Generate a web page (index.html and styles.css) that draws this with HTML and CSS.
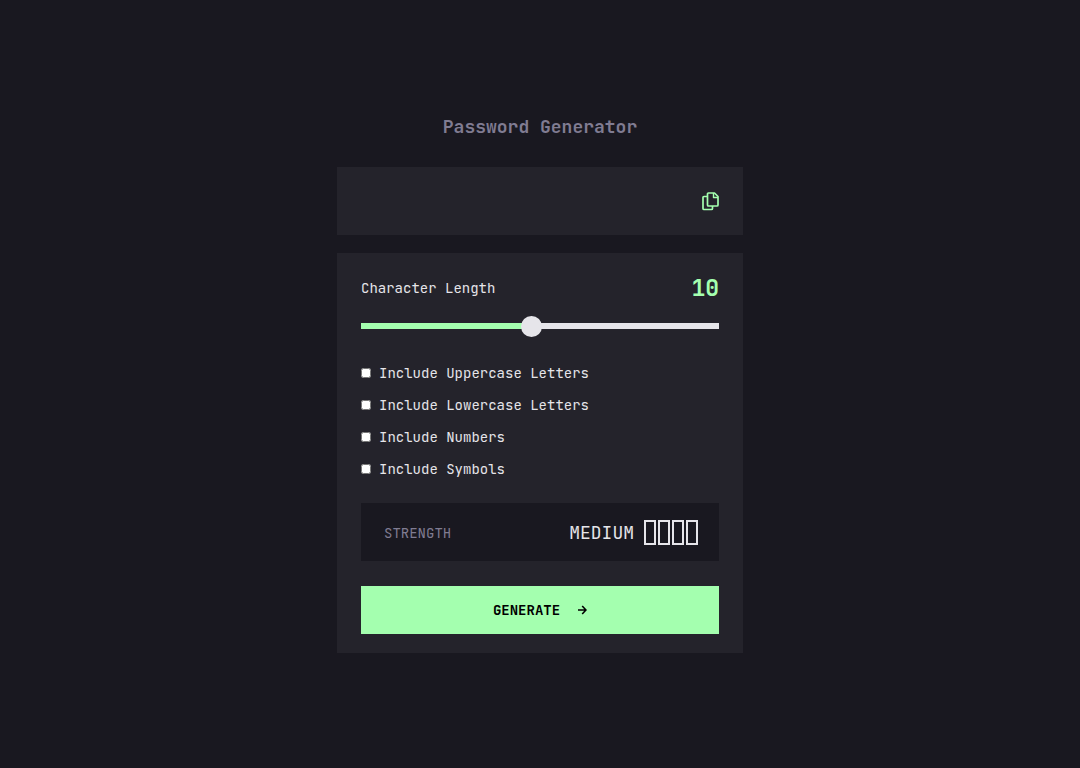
FILE: index.html
```html
<!DOCTYPE html>
<html lang="en">
<head>
  <meta charset="UTF-8">
  <meta name="viewport" content="width=device-width, initial-scale=1.0">
  <title>Password Generator</title>
  <link rel="stylesheet" href="styles.css">
</head>
<body>
  <main class="container">
    <h1 class="title">Password Generator</h1>

    <div class="password-box">
      <input type="text" class="password" id="password" aria-label="Generated password" readonly>
      <button type="button" class="copy-btn" id="copyBtn" aria-label="Copy password">
        <svg width="17" height="19" viewBox="0 0 17 19" fill="none" stroke="currentColor" stroke-width="1.7" stroke-linejoin="round">
          <path d="M5.5 4.5H2Q1 4.5 1 5.5V16.5Q1 17.5 2 17.5H9.5Q10.5 17.5 10.5 16.5V14"/>
          <path d="M6.5 1H12.5L16 4.5V13Q16 14 15 14H6.5Q5.5 14 5.5 13V2Q5.5 1 6.5 1Z"/>
          <path d="M11.5 1V5.5H16" stroke-width="1.4"/>
        </svg>
      </button>
    </div>

    <form class="panel" id="passwordForm">
      <div class="length-row">
        <label for="length">Character Length</label>
        <output class="length-value" id="lengthValue" for="length">10</output>
      </div>
      <input type="range" class="slider" id="length" min="1" max="20" value="10">

      <div class="options">
        <label class="option"><input type="checkbox" id="uppercase"> Include Uppercase Letters</label>
        <label class="option"><input type="checkbox" id="lowercase"> Include Lowercase Letters</label>
        <label class="option"><input type="checkbox" id="numbers"> Include Numbers</label>
        <label class="option"><input type="checkbox" id="symbols"> Include Symbols</label>
      </div>

      <div class="strength">
        <span class="strength-label">STRENGTH</span>
        <div class="strength-level">
          <span class="strength-text">MEDIUM</span>
          <div class="bars">
            <span class="bar"></span>
            <span class="bar"></span>
            <span class="bar"></span>
            <span class="bar"></span>
          </div>
        </div>
      </div>

      <button type="submit" class="generate-btn">
        GENERATE
        <svg width="9" height="10" viewBox="0 0 9 10" fill="none" stroke="currentColor" stroke-width="1.6">
          <path d="M0 5H8M4.2 1L8 5L4.2 9"/>
        </svg>
      </button>
    </form>
  </main>

  <script src="script.js"></script>
</body>
</html>
```

FILE: styles.css
```css
* {
  box-sizing: border-box;
  margin: 0;
  padding: 0;
}

body {
  display: flex;
  align-items: center;
  justify-content: center;
  min-height: 100vh;
  background-color: #191820;
  color: #e6e5ea;
  font-family: "JetBrains Mono", "DejaVu Sans Mono", monospace;
  font-size: 14px;
  line-height: 20px;
}

input, button {
  font: inherit;
}

.container {
  width: 100%;
  max-width: 406px;
}

.title {
  margin-bottom: 28px;
  color: #807c92;
  font-size: 18px;
  line-height: 24px;
  text-align: center;
}

.password-box {
  display: flex;
  align-items: center;
  gap: 16px;
  margin-bottom: 18px;
  padding: 20px 24px;
  background-color: #24232b;
}

.password {
  flex: 1;
  min-width: 0;
  height: 28px;
  background: none;
  border: none;
  outline: none;
  color: #e6e5ea;
  font-size: 23px;
}

.copy-btn {
  display: flex;
  background: none;
  border: none;
  color: #a4ffaf;
  cursor: pointer;
}

.panel {
  padding: 20px 24px 19px;
  background-color: #24232b;
}

.length-row {
  display: flex;
  align-items: center;
  justify-content: space-between;
  margin-bottom: 12px;
}

.length-value {
  color: #a4ffaf;
  font-size: 23px;
  font-weight: bold;
  line-height: 30px;
}

.slider {
  --fill: 47.4%;
  display: block;
  width: 100%;
  height: 22px;
  margin-bottom: 26px;
  appearance: none;
  background: none;
  cursor: pointer;
}

.slider::-webkit-slider-runnable-track {
  height: 6px;
  background: linear-gradient(to right, #a4ffaf var(--fill), #e6e5ea var(--fill));
}

.slider::-webkit-slider-thumb {
  width: 21px;
  height: 21px;
  margin-top: -7px;
  appearance: none;
  background-color: #e6e5ea;
  border-radius: 50%;
}

.options {
  display: grid;
  gap: 12px;
  margin-bottom: 24px;
}

.option {
  display: flex;
  align-items: center;
  gap: 8px;
}

.option input {
  width: 10px;
  height: 10px;
}

.strength {
  display: flex;
  align-items: center;
  justify-content: space-between;
  margin-bottom: 25px;
  padding: 17px 21px 16px 23px;
  background-color: #191820;
}

.strength-label {
  color: #807c92;
}

.strength-level {
  display: flex;
  align-items: center;
  gap: 10px;
}

.strength-text {
  font-size: 18px;
}

.bars {
  display: flex;
  gap: 2px;
}

.bar {
  width: 12px;
  height: 25px;
  border: 2px solid #e6e5ea;
}

.generate-btn {
  display: flex;
  align-items: center;
  justify-content: center;
  gap: 18px;
  width: 100%;
  padding: 14px;
  background-color: #a4ffaf;
  border: none;
  color: #000;
  font-weight: bold;
  cursor: pointer;
}
```

FILE: script.js
```js
const slider = document.getElementById('length');
const lengthValue = document.getElementById('lengthValue');
const password = document.getElementById('password');

const sets = {
  uppercase: 'ABCDEFGHIJKLMNOPQRSTUVWXYZ',
  lowercase: 'abcdefghijklmnopqrstuvwxyz',
  numbers: '0123456789',
  symbols: '!@#$%^&*()_+-=?'
};

function updateSlider() {
  const fill = (slider.value - slider.min) / (slider.max - slider.min) * 100;
  slider.style.setProperty('--fill', fill + '%');
  lengthValue.textContent = slider.value;
}

slider.addEventListener('input', updateSlider);

document.getElementById('passwordForm').addEventListener('submit', (e) => {
  e.preventDefault();
  let chars = '';
  for (const id in sets) {
    if (document.getElementById(id).checked) chars += sets[id];
  }
  let result = '';
  for (let i = 0; chars && i < slider.value; i++) {
    result += chars[Math.floor(Math.random() * chars.length)];
  }
  password.value = result;
});

document.getElementById('copyBtn').addEventListener('click', () => {
  navigator.clipboard.writeText(password.value);
});

updateSlider();
```
